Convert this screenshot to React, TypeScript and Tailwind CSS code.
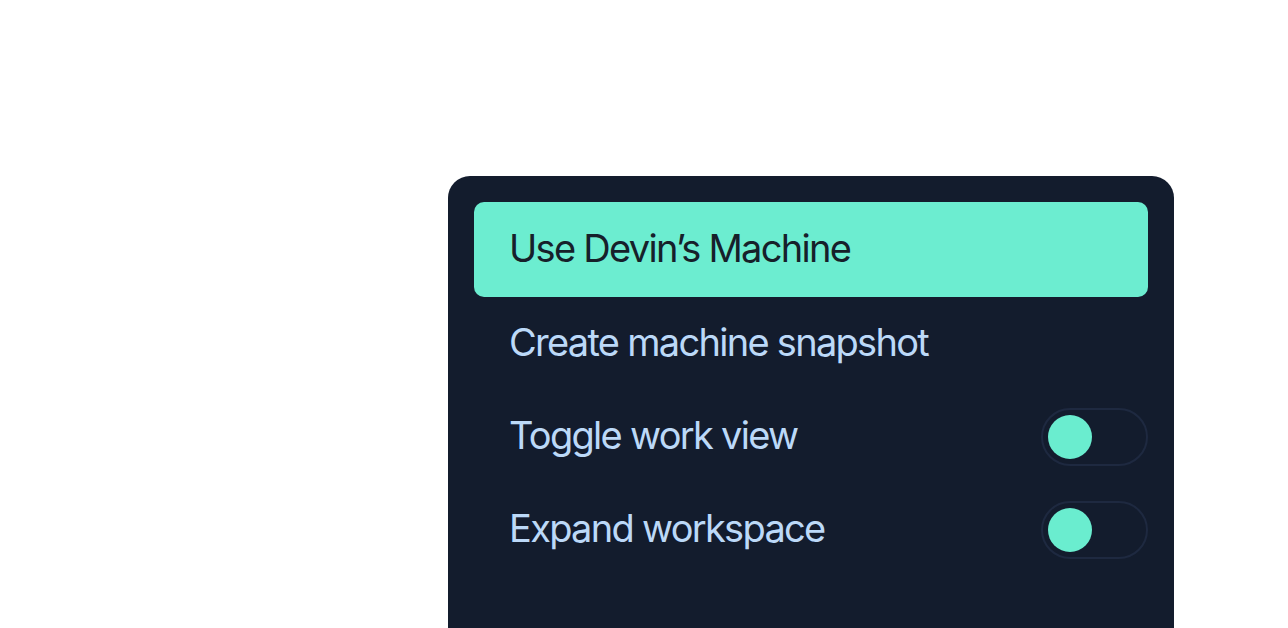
import React from 'react';

const items = [
  { label: 'Use Devin\u2019s Machine', active: true },
  { label: 'Create machine snapshot' },
  { label: 'Toggle work view', toggle: true },
  { label: 'Expand workspace', toggle: true },
];

const Toggle = () => (
  <div className="flex h-[58px] w-[107px] items-center rounded-full border-2 border-[#1e2940] px-[5px]">
    <div className="h-[44px] w-[44px] rounded-full bg-[#6aedcf]" />
  </div>
);

export default function App() {
  return (
    <div
      className="h-[628px] w-full overflow-hidden bg-white"
      style={{ fontFamily: 'Inter, "Noto Sans", sans-serif' }}
    >
      <div className="ml-[448px] mt-[176px] h-[520px] w-[726px] rounded-[22px] bg-[#131c2d] p-[26px]">
        {items.map((item) =>
          item.active ? (
            <div
              key={item.label}
              className="flex h-[95px] items-center rounded-[10px] bg-[#6cedd0] pb-[3px] pl-[35px] text-[38px] tracking-[-0.045em] text-[#16202a]"
            >
              {item.label}
            </div>
          ) : (
            <div
              key={item.label}
              className="flex h-[93px] items-center justify-between pl-[35px] text-[38px] tracking-[-0.045em] text-[#bcd9f8]"
            >
              <span className="pb-[3px]">{item.label}</span>
              {item.toggle && <Toggle />}
            </div>
          )
        )}
      </div>
    </div>
  );
}
